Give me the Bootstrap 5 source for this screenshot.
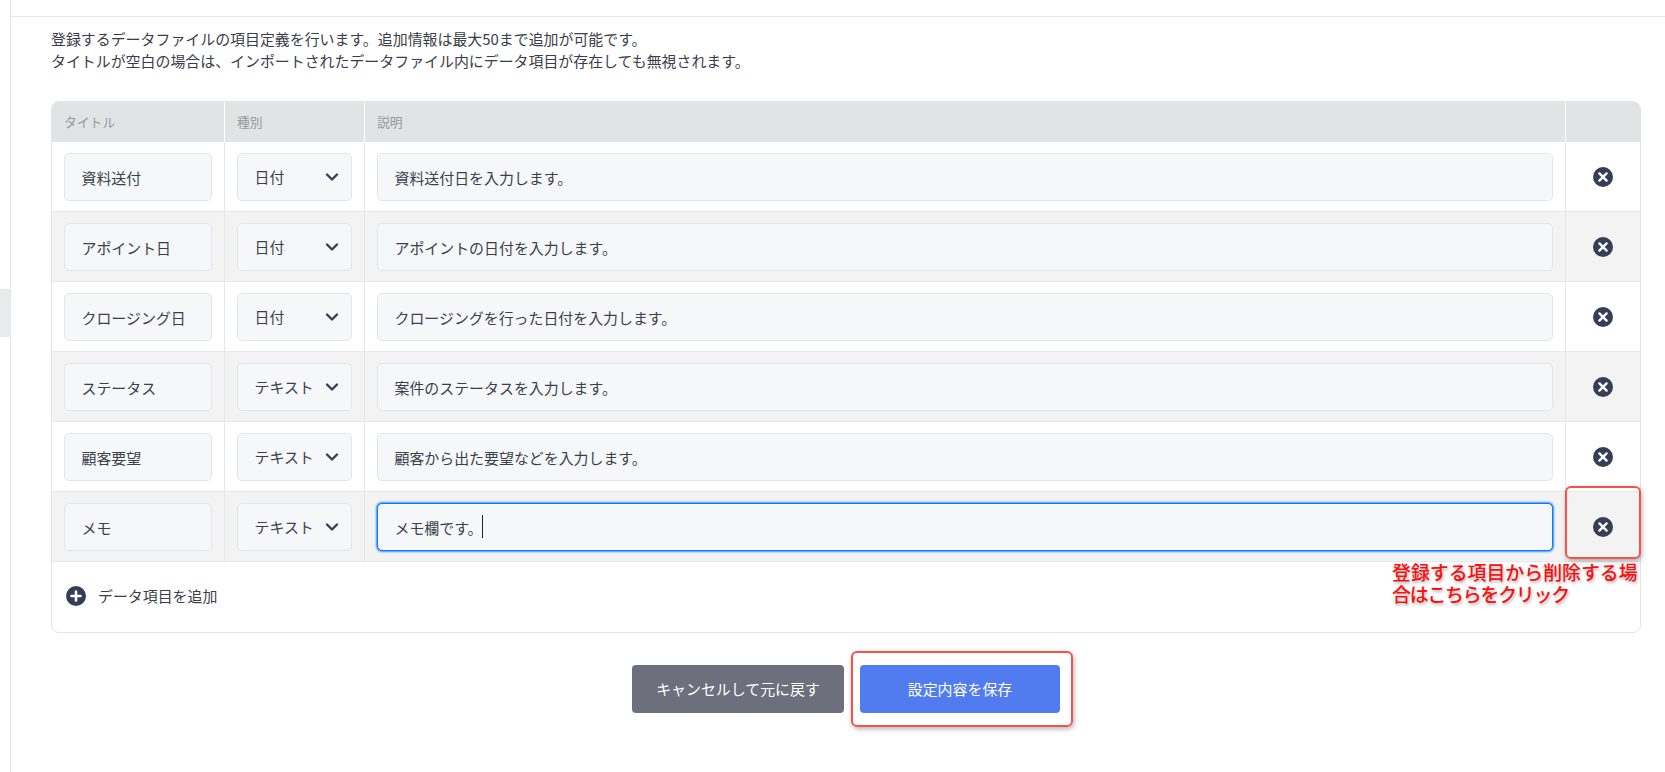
<!DOCTYPE html>
<html lang="ja">
<head>
<meta charset="utf-8">
<title>データ項目定義</title>
<link href="https://cdn.jsdelivr.net/npm/bootstrap@5.3.0/dist/css/bootstrap.min.css" rel="stylesheet">
<style>
html, body { height: 100%; }
body { font-family: "Noto Sans CJK JP", "Noto Sans", sans-serif; font-size: 14.93px; color: #3a3f4b; background: #fff; overflow: hidden; }
.page-shell { height: 772px; }
.side-rail { width: 11px; flex: none; border-right: 1px solid #e6e7e8; padding-top: 289px; }
.side-active { height: 48px; width: 10px; background: #e9eaec; }
.top-strip { height: 17px; border-bottom: 1px solid #e6e7e8; }
.main-area { padding: 11px 24px 0 40px; }
.intro-text { line-height: 22px; margin: 0 0 29px; color: #3a3d49; }
.def-card { width: 1590px; height: 532px; border: 1px solid #e3e4e6; border-radius: 8px; overflow: hidden; background: #fff; }
.def-table { table-layout: fixed; width: 1588px; margin: -1px 0 0 0; border-collapse: separate; border-spacing: 0; }
.def-table th { height: 41px; padding: 0 12px; background: #e2e3e5; font-weight: 400; font-size: 12.8px; color: #96989e; border-right: 1px solid #fff; vertical-align: middle; }
.def-table th:last-child { border-right: 0; }
.def-table td { height: 70px; padding: 11px 12px 10px; border-right: 1px solid #e6e7e8; border-bottom: 1px solid #e6e7e8; vertical-align: top; }
.def-table td:last-child { border-right: 0; padding-top: 25px; }
.def-table tbody tr:nth-child(even) td { background: #f3f3f4; }
.col-title { width: 173px; }
.col-kind { width: 140px; }
.col-desc { width: 1201px; }
.col-del { width: 74px; }
.def-input, .def-input:focus { height: 48px; background-color: #f6f7f9; border: 1px solid #e4e5e8; border-radius: 5px; padding: 0 16.5px; font-size: 14.93px; color: #3a3f4b; box-shadow: none; }
.def-select, .def-select:focus { height: 48px; background-color: #f6f7f9; border: 1px solid #e4e5e8; border-radius: 5px; padding: 1px 16.5px 0; font-size: 14.93px; color: #3a3f4b; box-shadow: none; background-size: 14px 10px; background-position: right 12px center; background-image: url("data:image/svg+xml,%3csvg xmlns='http://www.w3.org/2000/svg' viewBox='0 0 14 10'%3e%3cpath fill='none' stroke='%23363e55' stroke-width='2.4' stroke-linecap='round' stroke-linejoin='round' d='M2 2.5l5 5 5-5'/%3e%3c/svg%3e"); }
.def-input.is-editing, .def-input.is-editing:focus { border: 1px solid #0a7cf0; box-shadow: 0 0 2px 1px rgba(10,124,240,.8); background-color: #f6f7f9; }
.text-caret { position: absolute; left: 105px; top: 12px; width: 1px; height: 23px; background: #20232a; }
.del-btn { display: flex; margin: 0 auto; padding: 0; border: 0; background: none; }
.round-icon { width: 20px; height: 20px; display: block; flex: none; }
.add-row { height: 68px; padding: 0 0 0 14px; gap: 12px; }
.add-row span { font-size: 14.93px; }
.note-box { position: absolute; border: 2px solid #f4534c; border-radius: 6px; box-shadow: 1px 2px 5px rgba(0,0,0,.3); pointer-events: none; }
.note-del { left: 1514px; top: 385px; width: 76px; height: 73px; }
.note-text { position: absolute; left: 1341px; top: 462px; width: 250px; font-family: "Liberation Sans", "Noto Sans CJK JP", sans-serif; font-size: 18.9px; line-height: 21.8px; color: #f90f0f; text-shadow: 1px 2px 3px rgba(0,0,0,.3); font-weight: 500; }
.note-line { display: block; white-space: nowrap; }
.note-tight { letter-spacing: -1.2px; }
.btn-row { padding-top: 32px; gap: 16px; position: relative; }
.act-btn { height: 48px; border: 0; border-radius: 4px; color: #fff; font-size: 14.93px; padding: 0; }
.act-cancel { width: 212px; background: #6d6f7c; }
.act-save { width: 200px; background: #517cf0; }
.act-cancel:hover { background: #6d6f7c; color: #fff; }
.act-save:hover { background: #517cf0; color: #fff; }
.note-save { left: 800px; top: 18px; width: 222px; height: 76px; }
</style>
</head>
<body>
<div class="d-flex page-shell">
  <aside class="side-rail"><div class="side-active"></div></aside>
  <div class="flex-grow-1">
    <div class="top-strip"></div>
    <div class="main-area">
      <p class="intro-text">登録するデータファイルの項目定義を行います。追加情報は最大50まで追加が可能です。<br>タイトルが空白の場合は、インポートされたデータファイル内にデータ項目が存在しても無視されます。</p>
      <div class="position-relative">
        <div class="def-card">
          <table class="def-table">
            <colgroup><col class="col-title"><col class="col-kind"><col class="col-desc"><col class="col-del"></colgroup>
            <thead><tr><th>タイトル</th><th>種別</th><th>説明</th><th></th></tr></thead>
            <tbody>
              <tr>
                <td><input class="form-control def-input" value="資料送付"></td>
                <td><select class="form-select def-select"><option>日付</option><option>テキスト</option></select></td>
                <td><input class="form-control def-input" value="資料送付日を入力します。"></td>
                <td><button class="del-btn" type="button" aria-label="削除"><svg class="round-icon" viewBox="0 0 20 20"><circle cx="10" cy="10" r="10" fill="#363e55"/><path d="M6.4 6.4l7.2 7.2M13.6 6.4l-7.2 7.2" stroke="#fff" stroke-width="2.4" stroke-linecap="round"/></svg></button></td>
              </tr>
              <tr>
                <td><input class="form-control def-input" value="アポイント日"></td>
                <td><select class="form-select def-select"><option>日付</option><option>テキスト</option></select></td>
                <td><input class="form-control def-input" value="アポイントの日付を入力します。"></td>
                <td><button class="del-btn" type="button" aria-label="削除"><svg class="round-icon" viewBox="0 0 20 20"><circle cx="10" cy="10" r="10" fill="#363e55"/><path d="M6.4 6.4l7.2 7.2M13.6 6.4l-7.2 7.2" stroke="#fff" stroke-width="2.4" stroke-linecap="round"/></svg></button></td>
              </tr>
              <tr>
                <td><input class="form-control def-input" value="クロージング日"></td>
                <td><select class="form-select def-select"><option>日付</option><option>テキスト</option></select></td>
                <td><input class="form-control def-input" value="クロージングを行った日付を入力します。"></td>
                <td><button class="del-btn" type="button" aria-label="削除"><svg class="round-icon" viewBox="0 0 20 20"><circle cx="10" cy="10" r="10" fill="#363e55"/><path d="M6.4 6.4l7.2 7.2M13.6 6.4l-7.2 7.2" stroke="#fff" stroke-width="2.4" stroke-linecap="round"/></svg></button></td>
              </tr>
              <tr>
                <td><input class="form-control def-input" value="ステータス"></td>
                <td><select class="form-select def-select"><option>テキスト</option><option>日付</option></select></td>
                <td><input class="form-control def-input" value="案件のステータスを入力します。"></td>
                <td><button class="del-btn" type="button" aria-label="削除"><svg class="round-icon" viewBox="0 0 20 20"><circle cx="10" cy="10" r="10" fill="#363e55"/><path d="M6.4 6.4l7.2 7.2M13.6 6.4l-7.2 7.2" stroke="#fff" stroke-width="2.4" stroke-linecap="round"/></svg></button></td>
              </tr>
              <tr>
                <td><input class="form-control def-input" value="顧客要望"></td>
                <td><select class="form-select def-select"><option>テキスト</option><option>日付</option></select></td>
                <td><input class="form-control def-input" value="顧客から出た要望などを入力します。"></td>
                <td><button class="del-btn" type="button" aria-label="削除"><svg class="round-icon" viewBox="0 0 20 20"><circle cx="10" cy="10" r="10" fill="#363e55"/><path d="M6.4 6.4l7.2 7.2M13.6 6.4l-7.2 7.2" stroke="#fff" stroke-width="2.4" stroke-linecap="round"/></svg></button></td>
              </tr>
              <tr>
                <td><input class="form-control def-input" value="メモ"></td>
                <td><select class="form-select def-select"><option>テキスト</option><option>日付</option></select></td>
                <td><div class="position-relative"><input class="form-control def-input is-editing" value="メモ欄です。"><span class="text-caret"></span></div></td>
                <td><button class="del-btn" type="button" aria-label="削除"><svg class="round-icon" viewBox="0 0 20 20"><circle cx="10" cy="10" r="10" fill="#363e55"/><path d="M6.4 6.4l7.2 7.2M13.6 6.4l-7.2 7.2" stroke="#fff" stroke-width="2.4" stroke-linecap="round"/></svg></button></td>
              </tr>
            </tbody>
          </table>
          <div class="d-flex align-items-center add-row">
            <svg class="round-icon" viewBox="0 0 20 20"><circle cx="10" cy="10" r="10" fill="#363e55"/><path d="M10 5.5v9M5.5 10h9" stroke="#fff" stroke-width="2.6" stroke-linecap="round"/></svg>
            <span>データ項目を追加</span>
          </div>
        </div>
        <div class="note-box note-del"></div>
        <div class="note-text"><span class="note-line">登録する項目から削除する場</span><span class="note-line note-tight">合はこちらをクリック</span></div>
      </div>
      <div class="d-flex justify-content-center btn-row">
        <button class="btn act-btn act-cancel" type="button">キャンセルして元に戻す</button>
        <button class="btn act-btn act-save" type="button">設定内容を保存</button>
        <div class="note-box note-save"></div>
      </div>
    </div>
  </div>
</div>
<script src="https://cdn.jsdelivr.net/npm/bootstrap@5.3.0/dist/js/bootstrap.bundle.min.js"></script>
</body>
</html>
